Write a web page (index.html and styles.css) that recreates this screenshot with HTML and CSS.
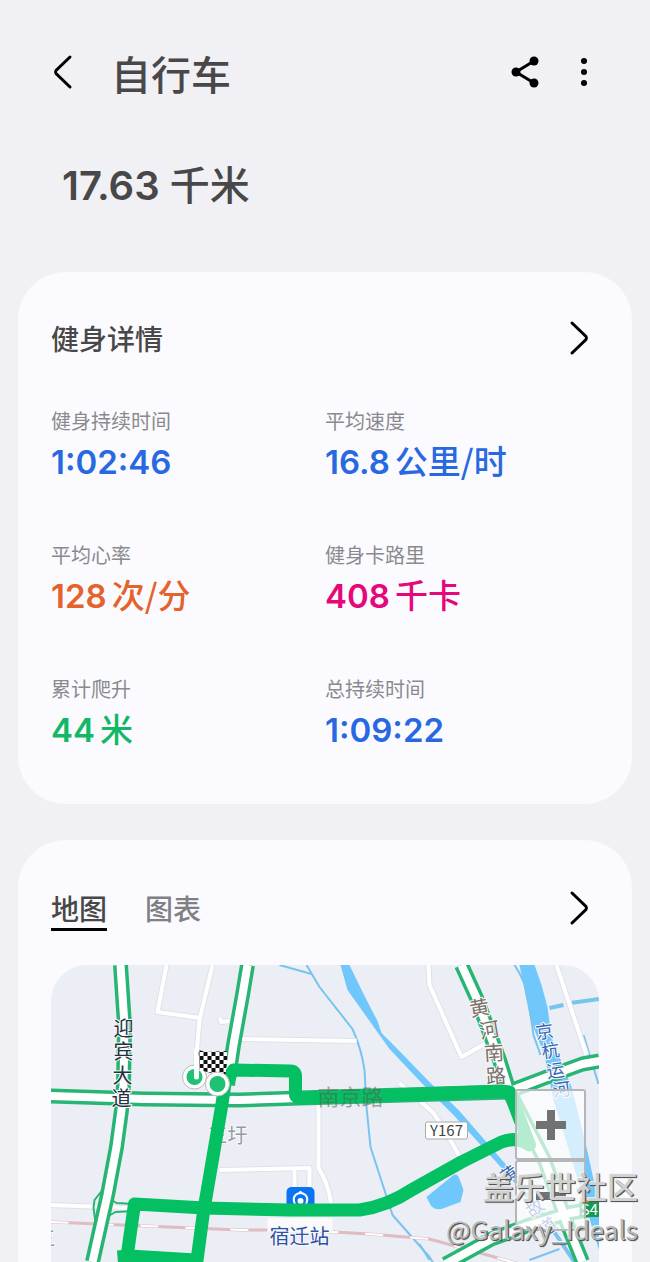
FILE: index.html
```html
<!DOCTYPE html>
<html lang="zh-CN">
<head>
    <meta charset="UTF-8">
    <meta name="viewport" content="width=device-width, initial-scale=1.0">
    <title>自行车</title>
    <link rel="stylesheet" href="styles.css">
</head>
<body>
    <header class="top-bar">
        <button class="icon-button back" type="button" aria-label="返回">
            <svg width="24" height="36" viewBox="0 0 24 36"><path d="M19 3 5 16.500Q4 18 5 19.500L19 33"/></svg>
        </button>
        <h1>自行车</h1>
        <button class="icon-button" type="button" aria-label="分享">
            <svg width="30" height="32" viewBox="0 0 30 32">
                <path d="M24 5 6 16 24 27"/>
                <circle cx="24" cy="5" r="4.500"/><circle cx="6" cy="16" r="4.500"/><circle cx="24" cy="27" r="4.500"/>
            </svg>
        </button>
        <button class="icon-button more" type="button" aria-label="更多">
            <svg width="8" height="30" viewBox="0 0 8 30"><circle cx="4" cy="4" r="3"/><circle cx="4" cy="15" r="3"/><circle cx="4" cy="26" r="3"/></svg>
        </button>
    </header>

    <p class="distance">17.63 <span>千米</span></p>

    <main>
        <!-- 健身详情 -->
        <section class="card details">
            <div class="card-head">
                <h2>健身详情</h2>
                <button class="icon-button" type="button" aria-label="查看详情">
                    <svg width="24" height="36" viewBox="0 0 24 36"><path d="M5 3 19 16.500Q20 18 19 19.500L5 33"/></svg>
                </button>
            </div>
            <dl class="metrics">
                <div>
                    <dt>健身持续时间</dt>
                    <dd class="blue">1:02:46</dd>
                </div>
                <div>
                    <dt>平均速度</dt>
                    <dd class="blue">16.8<span>公里/时</span></dd>
                </div>
                <div>
                    <dt>平均心率</dt>
                    <dd class="orange">128<span>次/分</span></dd>
                </div>
                <div>
                    <dt>健身卡路里</dt>
                    <dd class="pink">408<span>千卡</span></dd>
                </div>
                <div>
                    <dt>累计爬升</dt>
                    <dd class="green">44<span>米</span></dd>
                </div>
                <div>
                    <dt>总持续时间</dt>
                    <dd class="blue">1:09:22</dd>
                </div>
            </dl>
        </section>

        <!-- 地图 / 图表 -->
        <section class="card route">
            <div class="card-head">
                <div class="tabs">
                    <button class="tab active" type="button">地图</button>
                    <button class="tab" type="button">图表</button>
                </div>
                <button class="icon-button" type="button" aria-label="查看地图">
                    <svg width="24" height="36" viewBox="0 0 24 36"><path d="M5 3 19 16.500Q20 18 19 19.500L5 33"/></svg>
                </button>
            </div>
            <div class="map">
                <svg class="map-canvas" viewBox="51 965 549 297" preserveAspectRatio="xMidYMid slice">
                    <defs>
                        <pattern id="checks" width="8" height="8" patternUnits="userSpaceOnUse">
                            <rect width="8" height="8" fill="#fff"/>
                            <path d="M0 0h4v4H0zM4 4h4v4H4z" fill="#111"/>
                        </pattern>
                    </defs>

                    <!-- 河流 -->
                    <g class="water">
                        <path d="M341 965h9l14 29 14 27 4 12 14 14 34 35 30 29 58 67-4 3-60-66-28-28-36-38-15-21-27-38z"/>
                        <path d="M520 965h15l7 20 6 22 4 30 20 50 15 60 13 60v45l-24-80-22-72-9-45-14-35z"/>
                        <path d="M454 1175q4-2 6 4l4 11-3 12-19 7q-8 1-11-4l-4-8z"/>
                    </g>
                    <g class="stream">
                        <path d="M307 965l13 22 33 42q9 20 12 41l2 37 4 40 22 68 37 42 5 8"/>
                        <path d="M280 965l32 9"/>
                        <path d="M515 965q12 18 14 35l5 35 7 20"/>
                        <path d="M550 1008l14-3m7-2 29-4" class="wide"/>
                        <path d="M584 1035l15 49M420 1244l10 16M530 1260l30-11"/>
                        <path d="M513 1177l35 45 27 40" class="wide"/>
                    </g>

                    <!-- 铁路 -->
                    <path class="rail" d="M51 1222l95 4 94 4 60 0 70 4 60 5 90 25"/>
                    <path class="rail-dash" d="M51 1222l95 4 94 4 60 0 70 4 60 5 90 25"/>

                    <!-- 小路 -->
                    <path class="lane-edge" d="M167 965l-9 47 43 6M213 965l-13 55-5 58M220 1018l2 4 8-1M240 1039l117 2M319 1100v68q9 14 12 32l1 10M220 1170l90-2v30M295 1168v28M51 1205l80 3M429 965l1 20 32 72 25-14M557 965l30 90M400 1083l34 30 14 22 14 25"/>
                    <path class="lane" d="M167 965l-9 47 43 6M213 965l-13 55-5 58M220 1018l2 4 8-1M240 1039l117 2M319 1100v68q9 14 12 32l1 10M220 1170l90-2v30M295 1168v28M51 1205l80 3M429 965l1 20 32 72 25-14M557 965l30 90M400 1083l34 30 14 22 14 25"/>
                    <path d="M268 1218h65v14h-65z" fill="#fafafa"/>

                    <!-- 主干道 -->
                    <g class="road-edge">
                        <path d="M121 965l4 60-1 60-2 25-5 37-9 48-15 67"/>
                        <path d="M51 1096l94 3 95 1 60-2 208-6 42-16 33-12 17-3"/>
                        <path d="M248 965l-5 30-9 50-6 40"/>
                        <path d="M462 965l15 33 23 62 10 32 35 68 23 65 15 37"/>
                        <path d="M446 1264l46-25 38-14 40-12 30-5"/>
                    </g>
                    <g class="road">
                        <path d="M121 965l4 60-1 60-2 25-5 37-9 48-15 67"/>
                        <path d="M51 1096l94 3 95 1 60-2 208-6 42-16 33-12 17-3"/>
                        <path d="M248 965l-5 30-9 50-6 40"/>
                        <path d="M462 965l15 33 23 62 10 32 35 68 23 65 15 37"/>
                        <path d="M446 1264l46-25 38-14 40-12 30-5"/>
                    </g>
                    <path class="ramp" d="M103 1190l-8 10-1 8 2 14M112 1200l5 3 18 1M109 1216l7-4 20-1"/>

                    <!-- 地名 -->
                    <g class="label vertical dark">
                        <text x="124" y="1036">迎</text><text x="124" y="1059">宾</text>
                        <text x="123" y="1083">大</text><text x="122" y="1106">道</text>
                    </g>
                    <g class="label vertical brown">
                        <text transform="translate(481 1015) rotate(-10)">黄</text><text transform="translate(491 1037) rotate(-10)">河</text>
                        <text transform="translate(495 1060) rotate(-4)">南</text><text transform="translate(497 1083) rotate(-4)">路</text>
                    </g>
                    <g class="label vertical canal">
                        <text transform="translate(546 1038) rotate(-8)">京</text><text transform="translate(552 1057) rotate(-8)">杭</text>
                        <text transform="translate(557 1077) rotate(-8)">运</text><text transform="translate(563 1096) rotate(-8)">河</text>
                    </g>
                    <g class="label vertical canal">
                        <text transform="translate(513 1180) rotate(-35)">黄</text><text transform="translate(539 1213) rotate(-35)">故</text>
                        <text transform="translate(552 1232) rotate(-35)">道</text>
                    </g>
                    <text class="label gray" x="208" y="1143">三圩</text>
                    <text class="label gray" x="36" y="1246">三</text>

                    <!-- 车站 -->
                    <g>
                        <rect x="287" y="1187" width="28" height="28" rx="5" fill="#0a74f5"/>
                        <g fill="none" stroke="#fff" stroke-width="2">
                            <path d="M297 1207q-5-8-1-12 5-4 10 0 4 4-1 12"/>
                            <path d="M301 1194v-3M301 1203v7M296 1209h10"/>
                        </g>
                        <circle cx="301" cy="1201" r="3" fill="#fff"/>
                    </g>
                    <text class="label station" x="270" y="1244">宿迁站</text>

                    <!-- 骑行轨迹 -->
                    <path class="track" d="M218 1084l9-3 7-11 57 1q5 0 5 5v18q0 4 6 4l98-3 102-4 8 1 20 53q-12-9-28-3l-40 20-50 28q-24 16-52 20l-70 0-85-2-70-4-7 49"/>
                    <path class="track" d="M227 1074l-5 33-18 105-7 52M118 1257l12-1 66 4"/>
                    <text class="label faded" x="318" y="1105">南京路</text>

                    <!-- 起点与终点 -->
                    <g>
                        <circle cx="195" cy="1077" r="12" fill="#fff" stroke="#bbb"/>
                        <circle cx="195" cy="1077" r="8" fill="#1fc173"/>
                        <path d="M197 1050v27" stroke="#fff" stroke-width="5" stroke-linecap="round"/>
                        <path d="M199 1050l8 2 20-1 1 7-2 16-14-1-12-3z" fill="url(#checks)"/>
                        <circle cx="218" cy="1084" r="12" fill="#fff" stroke="#bbb"/>
                        <circle cx="218" cy="1084" r="8" fill="#1fc173"/>
                    </g>

                    <!-- 道路编号 -->
                    <rect x="426" y="1122" width="42" height="17" rx="2" fill="#fff" stroke="#aaa"/>
                    <text class="road-number" x="447" y="1136">Y167</text>
                    <path d="M580 1198h20v4h-20z" fill="#e4a11b"/>
                    <path d="M580 1202h20v15h-20z" fill="#159a55"/>
                    <text class="road-number light" x="590" y="1215">S4</text>
                </svg>
                <div class="map-zoom">
                    <button type="button" aria-label="放大">
                        <svg width="30" height="30" viewBox="0 0 30 30"><path d="M11 0h8v11h11v8H19v11h-8V19H0v-8h11z"/></svg>
                    </button>
                    <button type="button" aria-label="缩小">
                        <svg width="30" height="30" viewBox="0 0 30 30"><path d="M0 11h30v8H0z"/></svg>
                    </button>
                </div>
            </div>
        </section>
    </main>

    <div class="watermark">
        <span class="community">盖乐世社区</span>
        <span class="author">@Galaxy_Ideals</span>
    </div>
</body>
</html>
```
FILE: styles.css
```css
* {
    box-sizing: border-box;
}
body {
    position: relative;
    display: flex;
    flex-direction: column;
    min-height: 100vh;
    margin: 0;
    background-color: #f1f0f5;
    color: #484848;
    font-family: Inter, "Noto Sans CJK SC", sans-serif;
}
h1, h2, p, dl, dd {
    margin: 0;
}
button {
    padding: 0;
    border: 0;
    background: none;
    font-family: inherit;
    cursor: pointer;
}
.top-bar {
    display: flex;
    align-items: center;
    height: 144px;
    padding: 0 62px 0 51px;
}
.top-bar h1 {
    flex: 1;
    margin-left: 36px;
    padding-top: 8px;
    font-size: 40px;
    font-weight: 500;
    line-height: 56px;
}
.icon-button {
    display: flex;
    color: #000;
}
.icon-button path {
    fill: none;
    stroke: #000;
    stroke-width: 3;
    stroke-linecap: round;
}
.more {
    margin-left: 40px;
}
.distance {
    padding: 12px 62px 56px;
    font-size: 40px;
    font-weight: 600;
    line-height: 60px;
}
.distance span {
    font-weight: 500;
}
main {
    display: flex;
    flex: 1;
    flex-direction: column;
    gap: 36px;
    padding: 0 18px;
}
.card {
    padding: 0 33px;
    background-color: #fbfbff;
    border-radius: 48px;
}
.card-head {
    display: flex;
    justify-content: space-between;
    align-items: center;
    margin-right: 8px;
}
.details {
    padding-top: 44px;
    padding-bottom: 50px;
}
.card-head h2 {
    padding-top: 4px;
    font-size: 28px;
    font-weight: 500;
    line-height: 40px;
}
.metrics {
    display: grid;
    grid-template-columns: 1fr 1fr;
    row-gap: 54px;
    margin-top: 46px;
}
.metrics dt {
    color: #8a8a8e;
    font-size: 20px;
    line-height: 32px;
}
.metrics dd {
    font-size: 33px;
    font-weight: 600;
    line-height: 48px;
    white-space: nowrap;
}
.metrics span {
    margin-left: 5px;
    font-family: "Noto Sans CJK SC", sans-serif;
    font-weight: 500;
    line-height: 1;
}
.blue {
    color: #2868e0;
}
.orange {
    color: #e5622c;
}
.pink {
    color: #e6087b;
}
.green {
    color: #12b865;
}
.route {
    display: flex;
    flex: 1;
    flex-direction: column;
    padding-top: 44px;
    border-radius: 48px 48px 0 0;
}
.tabs {
    display: flex;
    gap: 38px;
}
.tab {
    padding-top: 8px;
    border-bottom: 3px solid transparent;
    color: #808084;
    font-size: 28px;
    font-weight: 500;
    line-height: 36px;
}
.tab.active {
    border-color: #000;
    color: #484848;
}

/* 地图 */
.map {
    position: relative;
    flex: 1;
    min-height: 297px;
    margin-top: 34px;
    overflow: hidden;
    background-color: #ebeef5;
    border-radius: 36px 36px 0 0;
}
.map-canvas {
    position: absolute;
    width: 100%;
    height: 100%;
    font-family: "Noto Sans CJK SC", sans-serif;
}
.water {
    fill: #70c7fc;
}
.stream, .lane, .lane-edge, .rail, .rail-dash, .road, .road-edge, .ramp, .track {
    fill: none;
    stroke-linejoin: round;
}
.stream {
    stroke: #79c3ef;
    stroke-width: 2;
}
.stream .wide {
    stroke-width: 4;
}
.rail {
    stroke: #dfbcc2;
    stroke-width: 3;
}
.rail-dash {
    stroke: #fff;
    stroke-width: 2;
    stroke-dasharray: 18 27;
}
.lane-edge {
    stroke: #dfe1e6;
    stroke-width: 6;
}
.lane {
    stroke: #fff;
    stroke-width: 4;
}
.road-edge {
    stroke: #27b574;
    stroke-width: 15;
}
.road {
    stroke: #fff;
    stroke-width: 8;
}
.ramp {
    stroke: #27b574;
    stroke-width: 2;
}
.track {
    stroke: #05c063;
    stroke-width: 13;
}
.label {
    paint-order: stroke;
    stroke: #f8f9fc;
    stroke-width: 2;
    font-size: 20px;
}
.vertical {
    text-anchor: middle;
}
.dark {
    fill: #23323a;
}
.brown {
    fill: #7c7069;
}
.canal {
    fill: #3768b5;
    font-size: 18px;
}
.gray {
    fill: #969aa0;
}
.station {
    fill: #304fa5;
}
.faded {
    fill: #5c5750;
    stroke: none;
    font-size: 22px;
    opacity: 0.5;
}
.road-number {
    fill: #444;
    font-size: 15px;
    text-anchor: middle;
}
.light {
    fill: #fff;
}
.map-zoom {
    position: absolute;
    top: 124px;
    right: 13px;
    display: flex;
    flex-direction: column;
}
.map-zoom button {
    display: flex;
    justify-content: center;
    align-items: center;
    width: 71px;
    height: 71px;
    background-color: rgba(255, 255, 255, 0.7);
    border: 2px solid #b4b6b9;
    border-radius: 3px;
}
.map-zoom svg {
    fill: #707274;
}
.watermark {
    position: absolute;
    right: 12px;
    bottom: 12px;
    display: flex;
    flex-direction: column;
    align-items: flex-end;
    color: #d0d1d2;
    font-family: "Noto Sans CJK SC", sans-serif;
    text-shadow: 1px 1px 1px #555, 1px 1px 0 #666, -1px -1px 0 #f4f4f4;
    pointer-events: none;
}
.community {
    font-size: 31px;
    font-weight: 500;
    line-height: 44px;
}
.author {
    color: #b8b9ba;
    font-size: 26px;
    line-height: 42px;
}
```
